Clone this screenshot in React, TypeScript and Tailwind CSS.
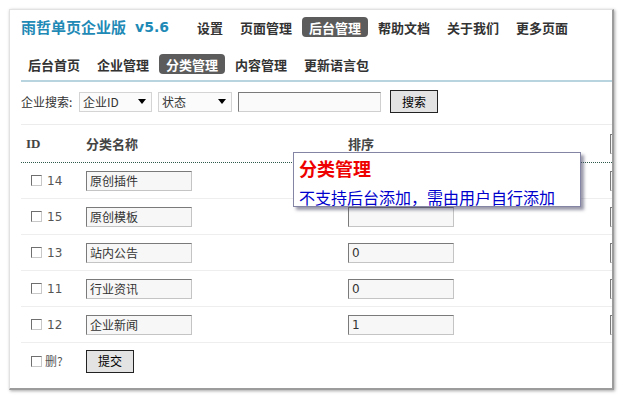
import React from "react";

const CJK = "font-['Noto_Sans_CJK_SC',sans-serif]";

const TOP_NAV = [
  { label: "设置", active: false },
  { label: "页面管理", active: false },
  { label: "后台管理", active: true },
  { label: "帮助文档", active: false },
  { label: "关于我们", active: false },
  { label: "更多页面", active: false },
];

const SUB_NAV = [
  { label: "后台首页", active: false },
  { label: "企业管理", active: false },
  { label: "分类管理", active: true },
  { label: "内容管理", active: false },
  { label: "更新语言包", active: false },
];

const ROWS = [
  { id: 14, name: "原创插件", sort: "" },
  { id: 15, name: "原创模板", sort: "" },
  { id: 13, name: "站内公告", sort: "0" },
  { id: 11, name: "行业资讯", sort: "0" },
  { id: 12, name: "企业新闻", sort: "1" },
];

function NavItem({ label, active }: { label: string; active: boolean }) {
  return (
    <span
      className={
        "flex h-[20px] items-center rounded-[4px] px-[7px] text-[13px] font-bold leading-none " +
        (active ? "bg-[#5c5c5c] text-white" : "text-[#333]")
      }
    >
      {label}
    </span>
  );
}

function CheckBox() {
  return (
    <span className="block h-[11px] w-[11px] shrink-0 border border-t-[#6f6f6f] border-l-[#6f6f6f] border-r-[#c8c8c8] border-b-[#c8c8c8] bg-white" />
  );
}

function TextBox({ value, mono = false }: { value: string; mono?: boolean }) {
  return (
    <div
      className={
        "flex h-[20px] w-[106px] shrink-0 items-center border border-t-[#7a7a7a] border-l-[#7a7a7a] border-r-[#c4c4c4] border-b-[#c4c4c4] bg-[#f7f7f7] pl-[3px] text-[12px] text-[#333] " +
        (mono ? "font-['DejaVu_Sans',sans-serif]" : "")
      }
    >
      {value}
    </div>
  );
}

function FakeSelect({ label, w }: { label: string; w: string }) {
  return (
    <div className={w + " flex h-[20px] shrink-0 items-center border border-[#d4d4d4] bg-[#fbfbfb] pl-[3px] pr-[5px] text-[12px] text-[#333]"}>
      <span>{label}</span>
      <span className="ml-auto block h-0 w-0 border-x-[4px] border-t-[5px] border-x-transparent border-t-black" />
    </div>
  );
}

export default function App() {
  return (
    <div className={"h-[398px] w-[624px] overflow-hidden bg-white pl-[9px] pt-[9px] " + CJK}>
      <div className="relative h-[381px] w-[605px] overflow-hidden border-l border-t border-r-2 border-b-2 border-l-[#e2e2e2] border-t-[#e2e2e2] border-r-[#9c9c9c] border-b-[#9c9c9c] bg-white pl-[11px] shadow-[1px_1px_3px_rgba(0,0,0,0.35)]">
        {/* top nav */}
        <div className="mt-[7px] flex h-[20px] items-center">
          <span className="text-[15px] font-bold text-[#1f8ab6]">雨哲单页企业版</span>
          <span className="ml-[9px] font-['DejaVu_Sans',sans-serif] text-[14px] font-bold text-[#1f8ab6]">v5.6</span>
          <div className="ml-[21px] flex items-center gap-[3px]">
            {TOP_NAV.map((n) => (
              <NavItem key={n.label} label={n.label} active={n.active} />
            ))}
          </div>
        </div>

        {/* sub nav */}
        <div className="mt-[17px] flex h-[20px] items-center gap-[3px]">
          {SUB_NAV.map((n) => (
            <NavItem key={n.label} label={n.label} active={n.active} />
          ))}
        </div>
        <div className="mt-[6px] h-[2px] bg-[#b8d4de]" />

        {/* search */}
        <div className="border-b border-[#ececec] pb-[11px]">
          <div className="mt-[8px] flex h-[23px] items-center text-[12px] text-[#333]">
            <span className="w-[58px] shrink-0">企业搜索:</span>
            <FakeSelect label="企业ID" w="w-[73px]" />
            <div className="ml-[6px]">
              <FakeSelect label="状态" w="w-[74px]" />
            </div>
            <div className="ml-[6px] h-[20px] w-[143px] shrink-0 border border-t-[#7a7a7a] border-l-[#7a7a7a] border-r-[#cfcfcf] border-b-[#cfcfcf] bg-[#fafafa]" />
            <button className="ml-[9px] flex h-[23px] w-[48px] shrink-0 items-center justify-center border border-[#222] bg-[#e3e3e3] text-[12px] text-black">
              搜索
            </button>
          </div>
        </div>

        {/* table header */}
        <div className="flex h-[38px] items-center border-b border-dotted border-[#2d5a4a] text-[13px] font-bold text-[#444]">
          <span className="w-[65px] shrink-0 pl-[5px] font-['Liberation_Serif',serif] text-[13px]">ID</span>
          <span className="w-[262px] shrink-0">分类名称</span>
          <span className="w-[262px] shrink-0">排序</span>
          <TextBox value="" />
        </div>

        {ROWS.map((r) => (
          <div key={r.id} className="flex h-[36px] items-center border-b border-[#eeeeee]">
            <div className="flex w-[65px] shrink-0 items-center gap-[5px] pl-[10px]">
              <CheckBox />
              <span className="font-['DejaVu_Sans',sans-serif] text-[12px] text-[#555]">{r.id}</span>
            </div>
            <div className="w-[262px] shrink-0">
              <TextBox value={r.name} />
            </div>
            <div className="w-[262px] shrink-0">
              <TextBox value={r.sort} mono />
            </div>
            <TextBox value="" />
          </div>
        ))}

        <div className="flex h-[36px] items-center">
          <div className="flex w-[65px] shrink-0 items-center gap-[3px] pl-[10px] text-[12px] text-[#555]">
            <CheckBox />
            <span>删?</span>
          </div>
          <button className="flex h-[23px] w-[48px] items-center justify-center border border-[#222] bg-[#e3e3e3] text-[12px] text-black">
            提交
          </button>
        </div>

        {/* tooltip */}
        <div className="absolute left-[283px] top-[142px] h-[55px] w-[288px] border border-[#8484a4] bg-white pl-[5px] shadow-[3px_3px_3px_rgba(70,70,100,0.55)]">
          <div className="mt-[3px] flex h-[24px] items-center text-[18px] font-bold text-[#ee0000]">分类管理</div>
          <div className="mt-[5px] flex h-[24px] items-center text-[16px] text-[#0000cc]">不支持后台添加，需由用户自行添加</div>
        </div>
      </div>
    </div>
  );
}
